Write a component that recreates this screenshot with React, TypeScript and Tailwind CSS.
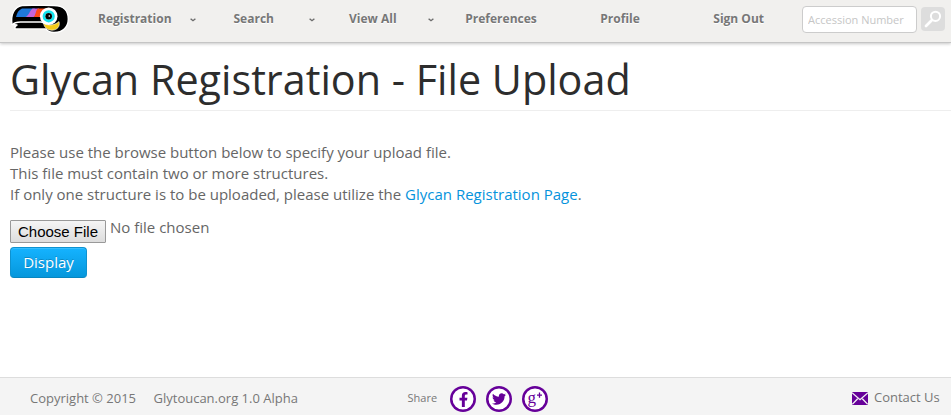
import React from 'react';
import { FaFacebookF, FaTwitter } from 'react-icons/fa';

function ToucanLogo() {
  return (
    <svg className="block h-[30px] w-[60px]" viewBox="0 0 60 30">
      <path d="M12 1.500C20 1 35 1.500 44 1.500c9.500 0 14.300 5.500 14.300 13.500 0 8-5.300 13.500-14.300 13.500-4 0-6.500-1.500-8-3.600H5C4.500 23.500 5 22 7 21L2 20.500C.5 11 4 3 12 1.500z" fill="#000" stroke="#fff" strokeWidth="1.400" strokeLinejoin="round" />
      <path d="M12 4.500h13L18.500 13H6C7 9 8.500 6 12 4.500z" fill="#1f79dc" />
      <path d="M22.500 4.500H29L24.500 13h-9C18.500 12 20 6.500 22.500 4.500z" fill="#c465dc" />
      <path d="M28 4.500h7.500L31 13h-7.500C26 11.500 25.500 6 28 4.500z" fill="#ff4a18" />
      <path d="M2 20.800c2-2 4.500-2.800 8.500-2.800h20.500c2 0 3 .8 4 2" fill="none" stroke="#fff" strokeWidth="1.500" />
      <path d="M33.500 19c5 3 11 2.500 15.500-1.500 1.500 5-2 8.700-7 8.700-4.500 0-8-2.700-8.500-7.200z" fill="#f5cb18" stroke="#fff" strokeWidth=".6" />
      <circle cx="38.700" cy="12.300" r="8.800" fill="#fff" />
      <circle cx="38.700" cy="12.300" r="4.700" fill="none" stroke="#12e3ee" strokeWidth="2.800" />
      <circle cx="38.700" cy="12.300" r="3.300" fill="#000" />
      <circle cx="39.300" cy="12" r=".8" fill="#fff" />
    </svg>
  );
}

function NavItem({ label, className, arrow }: { label: string; className: string; arrow?: string }) {
  return (
    <a className={`flex shrink-0 items-center whitespace-nowrap ${className}`}>
      <span className={arrow}>{label}</span>
      {arrow && (
        <svg className="mt-[3px] h-[4px] w-[6px]" viewBox="0 0 6 4">
          <path d="M.6.700 3 2.700 5.400.700" fill="none" stroke="#6b6b6b" strokeWidth="1.400" />
        </svg>
      )}
    </a>
  );
}

function Social({ children }: { children: React.ReactNode }) {
  return (
    <a className="flex size-[26px] items-center justify-center rounded-full bg-white text-[#660099] shadow-[inset_0_0_0_2.500px_#660099]">
      {children}
    </a>
  );
}

export default function App() {
  return (
    <div className="flex h-[415px] w-[951px] flex-col overflow-hidden bg-white font-['Open_Sans','Noto_Sans',sans-serif] text-[15px] leading-[21px] text-[#666]">
      <header className="flex h-[43px] shrink-0 border-b border-[#c5c5c5] bg-[#f1f0ee] shadow-[0_1px_3px_rgba(0,0,0,0.22)]">
        <div className="w-[98px] shrink-0 pt-[4px] pl-[10px]"><ToucanLogo /></div>
        <nav className="flex h-[37px] w-[704px] shrink-0 items-center text-[12px] font-bold text-[#777] [text-shadow:0_1px_0_#fff]">
          <NavItem label="Registration" className="w-[135.500px]" arrow="w-[91.500px]" />
          <NavItem label="Search" className="w-[115.500px]" arrow="w-[75px]" />
          <NavItem label="View All" className="w-[116.300px]" arrow="w-[78.500px]" />
          <NavItem label="Preferences" className="w-[135px]" />
          <NavItem label="Profile" className="w-[113px]" />
          <NavItem label="Sign Out" className="w-[88px]" />
        </nav>
        <div className="flex items-start gap-[4px] pt-[6px]">
          <input className="h-[27px] w-[115px] rounded-[4px] border border-[#ccc] bg-white px-[5px] text-[11px] text-[#555] outline-none placeholder:text-[#c6c6c6]" placeholder="Accession Number" />
          <button className="mt-px flex size-[24px] items-center justify-center rounded-[4px] bg-[#ddd]">
            <svg className="size-[18px]" viewBox="0 0 18 18" fill="none" stroke="#fff" strokeLinecap="round">
              <circle cx="11.500" cy="6.300" r="4.600" strokeWidth="2" />
              <path d="m7.500 10.500-5.500 5.500" strokeWidth="2.800" />
            </svg>
          </button>
        </div>
      </header>

      <main className="flex-1 pl-[10px]">
        <h1 className="h-[68px] border-b border-[#eee] pt-[16px] text-[41.300px] leading-[41px] text-[#2d2d2d]">Glycan Registration - File Upload</h1>
        <p className="mt-[31px]">
          Please use the browse button below to specify your upload file.<br />
          This file must contain two or more structures.<br />
          If only one structure is to be uploaded, please utilize the <a className="text-[#0593dc]">Glycan Registration Page</a>.
        </p>
        <div className="mt-[15px] flex gap-[4px]">
          <button className="h-[23px] w-[96px] shrink-0 rounded-[1px] border border-[#999] bg-linear-to-b from-[#f5f5f5] to-[#dddddd] font-['Liberation_Sans',Arial,sans-serif] text-[15px] leading-[21px] text-black">Choose File</button>
          <span className="-mt-[3px]">No file chosen</span>
        </div>
        <button className="mt-[4px] block h-[31px] w-[77px] rounded-[4px] border border-[#0e92d0] border-b-[#0786c0] bg-linear-to-b from-[#15b3ff] to-[#0597dc] pb-[1px] text-[15px] leading-[28px] text-white shadow-[inset_0_1px_0_rgba(255,255,255,0.15)] [text-shadow:0_-1px_0_rgba(0,0,0,0.2)]">Display</button>
      </main>

      <footer className="flex h-[38px] shrink-0 border-t border-[#ddd] bg-[#f4f4f4] pl-[30px] text-[13px] leading-[20px] text-[#777]">
        <span className="w-[123.500px] pt-[10px]">Copyright © 2015</span>
        <span className="w-[254px] pt-[10px]">Glytoucan.org 1.0 Alpha</span>
        <span className="w-[42.500px] pt-[10px] text-[11px]">Share</span>
        <div className="flex w-[402px] gap-[10px] pt-[8px]">
          <Social>
            <FaFacebookF size={15} />
          </Social>
          <Social><FaTwitter size={14} /></Social>
          <Social>
            <svg className="size-[20px] shrink-0" viewBox="0 0 20 20" fill="currentColor">
              <text x="2.500" y="13.500" fontFamily="Liberation Serif, serif" fontSize="17">g</text>
              <path d="M12 5.500h5v1.300h-5zM13.850 3.600h1.300v5.100h-1.300z" />
            </svg>
          </Social>
        </div>
        <div className="flex pt-[9px]">
          <svg className="mt-[5px] mr-[6px] h-[13px] w-[16px]" viewBox="0 0 17 14" preserveAspectRatio="none">
            <path d="M0 0h17v14H0z" fill="#660099" />
            <path d="m0 .8 8.500 7.500L17 .8M.3 13.300l5.700-6M16.700 13.300l-5.700-6" fill="none" stroke="#f4f4f4" strokeWidth="1.400" />
          </svg>
          <span>Contact Us</span>
        </div>
      </footer>
    </div>
  );
}
